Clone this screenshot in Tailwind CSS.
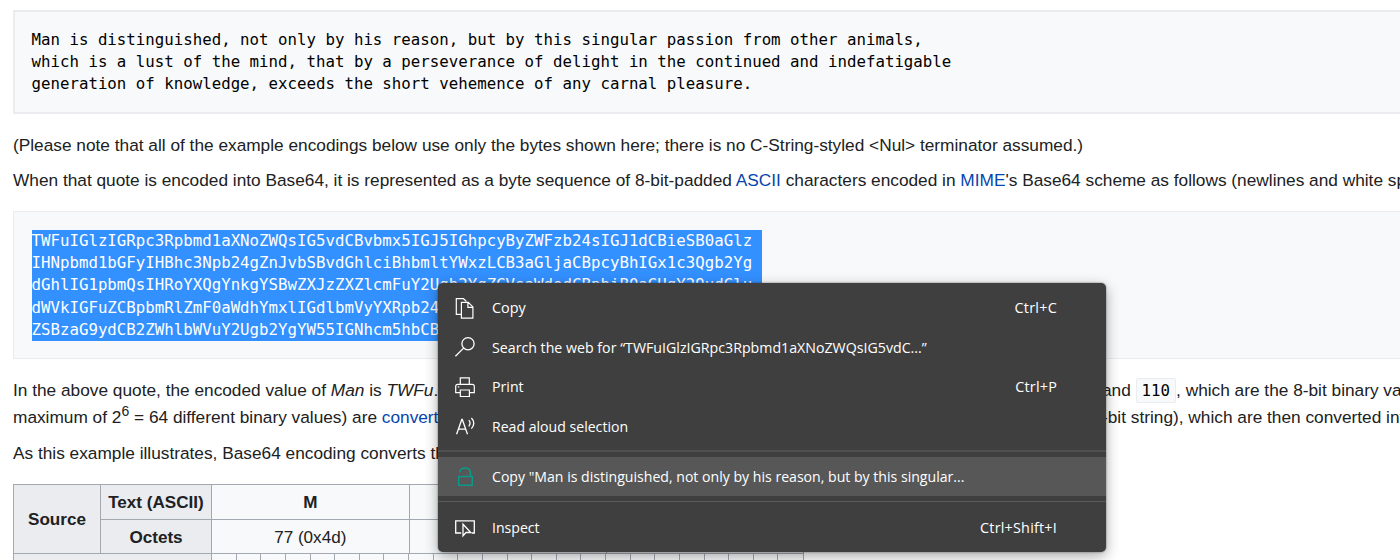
<!DOCTYPE html>
<html lang="en">
<head>
<meta charset="utf-8">
<title>Base64</title>
<script src="https://cdn.jsdelivr.net/npm/@tailwindcss/browser@4"></script>
</head>
<body class="bg-white">
<div class="relative h-[560px] w-[1400px] overflow-hidden bg-white font-['Liberation_Sans',sans-serif] text-[17.27px] whitespace-nowrap text-[#202122]">
  <main class="flex flex-col pt-[10px] pl-[13px]">
    <pre class="h-[104px] w-[1400px] border-2 border-[#eaecf0] bg-[#f8f9fa] pt-[17px] pl-[16.5px] font-['DejaVu_Sans_Mono',monospace] text-[15.76px] leading-[22.2px] text-black">Man is distinguished, not only by his reason, but by this singular passion from other animals,
which is a lust of the mind, that by a perseverance of delight in the continued and indefatigable
generation of knowledge, exceeds the short vehemence of any carnal pleasure.</pre>
    <p class="mt-[17px] leading-[28px]">(Please note that all of the example encodings below use only the bytes shown here; there is no C-String-styled &lt;Nul&gt; terminator assumed.)</p>
    <p class="mt-[7px] leading-[28px]">When that quote is encoded into Base64, it is represented as a byte sequence of 8-bit-padded <a class="text-[#0645ad]">ASCII</a> characters encoded in <a class="text-[#0645ad]">MIME</a>'s Base64 scheme as follows (newlines and white spaces</p>
    <div class="mt-[17px] h-[148px] w-[1400px] border border-[#eaecf0] bg-[#f8f9fa] pt-[18px] pl-[17.5px]">
      <pre class="w-[730.5px] bg-[#3390ff] font-['DejaVu_Sans_Mono',monospace] text-[15.76px] leading-[22.2px] text-white">TWFuIGlzIGRpc3Rpbmd1aXNoZWQsIG5vdCBvbmx5IGJ5IGhpcyByZWFzb24sIGJ1dCBieSB0aGlz
IHNpbmd1bGFyIHBhc3Npb24gZnJvbSBvdGhlciBhbmltYWxzLCB3aGljaCBpcyBhIGx1c3Qgb2Yg
dGhlIG1pbmQsIHRoYXQgYnkgYSBwZXJzZXZlcmFuY2Ugb2YgZGVsaWdodCBpbiB0aGUgY29udGlu
dWVkIGFuZCBpbmRlZmF0aWdhYmxlIGdlbmVyYXRpb24gb2Yga25vd2xlZGdlLCBleGNlZWRzIHRo
ZSBzaG9ydCB2ZWhlbWVuY2Ugb2YgYW55IGNhcm5hbCBwbGVhc3VyZS4=</pre>
    </div>
    <div class="mt-[17px] flex h-[28px] leading-[28px]">
      <p class="w-[1089px] flex-none">In the above quote, the encoded value of <i>Man</i> is <i>TWFu</i>.</p>
      <p>and <code class="rounded-[2px] border border-[#eaecf0] bg-[#f8f9fa] px-[5px] py-[2px] font-['DejaVu_Sans_Mono',monospace] text-[15.76px] text-black">110</code>, which are the 8-bit binary values</p>
    </div>
    <div class="-mt-px flex h-[28px] leading-[28px]">
      <p class="w-[1089px] flex-none">maximum of 2<sup class="text-[14px]">6</sup> = 64 different binary values) are <a class="text-[#0645ad]">convert</a></p>
      <p>-bit string), which are then converted into</p>
    </div>
    <p class="mt-[8px] leading-[28px]">As this example illustrates, Base64 encoding converts th</p>
    <div class="mt-[17px] grid w-[791px] grid-cols-[87px_111px_197.5px_197px_197.5px] grid-rows-[34.5px_34.5px_34px] border-t border-l border-[#a2a9b1] bg-[#f8f9fa] text-center text-[17.1px] leading-[35px]">
      <div class="row-span-2 border-r border-b border-[#a2a9b1] bg-[#eaecf0] pt-[17px] font-bold">Source</div>
      <div class="border-r border-b border-[#a2a9b1] bg-[#eaecf0] font-bold">Text (ASCII)</div>
      <div class="border-r border-b border-[#a2a9b1] font-bold">M</div>
      <div class="border-r border-b border-[#a2a9b1] font-bold">a</div>
      <div class="border-r border-b border-[#a2a9b1] font-bold">n</div>
      <div class="border-r border-b border-[#a2a9b1] bg-[#eaecf0] font-bold">Octets</div>
      <div class="border-r border-b border-[#a2a9b1]">77 (0x4d)</div>
      <div class="border-r border-b border-[#a2a9b1]">97 (0x61)</div>
      <div class="border-r border-b border-[#a2a9b1]">110 (0x6e)</div>
      <div class="col-span-2 border-r border-[#a2a9b1] bg-[#eaecf0]"></div>
      <div class="col-span-3 grid grid-cols-24 divide-x divide-[#a2a9b1] border-r border-[#a2a9b1]">
        <i></i><i></i><i></i><i></i><i></i><i></i><i></i><i></i><i></i><i></i><i></i><i></i><i></i><i></i><i></i><i></i><i></i><i></i><i></i><i></i><i></i><i></i><i></i><i></i>
      </div>
    </div>
  </main>

  <div class="absolute top-[283px] left-[438px] flex h-[268.5px] w-[668px] flex-col rounded-[5px] bg-[#3f3f3f] pt-[5.4px] font-['Open_Sans',sans-serif] text-[14.1px] text-white shadow-[0_4px_14px_rgba(0,0,0,0.35),0_0_2px_rgba(0,0,0,0.5)]">
    <div class="flex h-[39.4px] items-center pr-[49px] pl-[16px]">
      <svg class="mr-[16px] size-[22px]" viewBox="0 0 22 22" fill="none" stroke="currentColor" stroke-width="1.2"><path d="M7.2 17.3H2.3V1.7H9.5l2.9 2.7M7.4 5.3h6.9l4.6 4.6v11.2H7.4zM13.9 5.3v5h5"/></svg>
      <span class="text-[14.4px]">Copy</span><span class="ml-auto text-[14.4px] tracking-[0.25px]">Ctrl+C</span>
    </div>
    <div class="flex h-[39.4px] items-center pr-[49px] pl-[16px]">
      <svg class="mr-[16px] size-[22px]" viewBox="0 0 22 22" fill="none" stroke="currentColor" stroke-width="1.3"><circle cx="14" cy="7.7" r="6.1"/><path d="M9.6 12.1 1.4 20.3"/></svg>
      <span class="text-[14.2px]">Search the web for “TWFuIGlzIGRpc3Rpbmd1aXNoZWQsIG5vdC...”</span>
    </div>
    <div class="flex h-[39.4px] items-center pr-[49px] pl-[16px]">
      <svg class="mr-[16px] size-[22px]" viewBox="0 0 22 22" fill="none" stroke="currentColor" stroke-width="1.2"><path d="M6.3 8.4V1.9h9v6.5M6.3 16.6H1.7v-6.2q0-2 2-2h14.6q2 0 2 2v6.2h-4.9M6.3 14h9.1v6.5H6.3z"/><path d="M3.8 10.9h1.5"/></svg>
      <span class="text-[14.2px]">Print</span><span class="ml-auto text-[14.4px] tracking-[0.2px]">Ctrl+P</span>
    </div>
    <div class="flex h-[39.4px] items-center pr-[49px] pl-[16px]">
      <svg class="mr-[16px] size-[22px]" viewBox="0 0 22 22" fill="none" stroke="currentColor" stroke-width="1.3"><path d="M2.6 19.3 7.8 4.5h.5l5.2 14.8M4.5 14.2h7.1M14.8 5.1q2.6 2.9 0 6.2M17.4 3q4.8 5 0 10.6"/></svg>
      <span>Read aloud selection</span>
    </div>
    <div class="mt-[4px] h-[2px] shrink-0 bg-[#505050]"></div>
    <div class="mt-[5px] flex h-[39.4px] items-center bg-[#575757] pr-[49px] pl-[16px]">
      <svg class="mr-[16px] size-[22px] text-[#0d998a]" viewBox="0 0 22 22" fill="none" stroke="currentColor" stroke-width="1.5"><path d="M4.7 10.6h13.6v8.6H4.7zM5.9 6.4q.4-4.3 5.1-4.3 5.4 0 5.4 4.6v3.9"/></svg>
      <span>Copy "Man is distinguished, not only by his reason, but by this singular...</span>
    </div>
    <div class="mt-[5px] h-px shrink-0 bg-[#5a5a5a]"></div>
    <div class="mt-[6px] flex h-[39.4px] items-center pr-[49px] pl-[16px]">
      <svg class="mr-[16px] size-[22px]" viewBox="0 0 22 22" fill="none" stroke="currentColor" stroke-width="1.3"><path d="M7.2 16H1.7V3.8h18.6V16h-2.5"/><path d="M9 7.2v11.6l3-3.3h4.8z"/></svg>
      <span>Inspect</span><span class="ml-auto text-[14.4px] tracking-[0.2px]">Ctrl+Shift+I</span>
    </div>
  </div>
</div>
</body>
</html>
